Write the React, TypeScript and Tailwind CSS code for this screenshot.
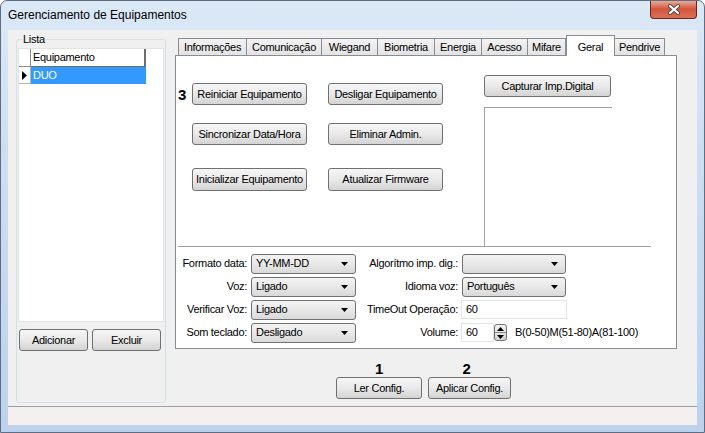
import React from 'react';

function Btn({ children, className = '' }: { children: React.ReactNode; className?: string }) {
  return (
    <button
      className={`flex items-center justify-center whitespace-nowrap rounded-[3px] border border-[#707070] bg-gradient-to-b from-[#f6f6f6] via-[#e9e9e9] to-[#d4d4d4] text-[11px] leading-none tracking-[-0.3px] text-black ${className}`}
    >
      {children}
    </button>
  );
}

function Combo({ value, className = '' }: { value: string; className?: string }) {
  return (
    <div
      className={`flex h-[20px] items-center justify-between rounded-[3px] border border-[#707070] bg-gradient-to-b from-[#f3f3f3] via-[#e8e8e8] to-[#d9d9d9] pl-[4px] pr-[7px] ${className}`}
    >
      <span className="leading-none">{value}</span>
      <svg width="7" height="4" viewBox="0 0 7 4">
        <path d="M0 0h7L3.5 4z" fill="#000" />
      </svg>
    </div>
  );
}

const tabs = [
  { nome: 'Informações', w: 'w-[69px]' },
  { nome: 'Comunicação', w: 'w-[75px]' },
  { nome: 'Wiegand', w: 'w-[56px]' },
  { nome: 'Biometria', w: 'w-[57px]' },
  { nome: 'Energia', w: 'w-[47px]' },
  { nome: 'Acesso', w: 'w-[46px]' },
  { nome: 'Mifare', w: 'w-[38px]' },
  { nome: 'Geral', w: 'w-[49px]', ativo: true },
  { nome: 'Pendrive', w: 'w-[50px]' },
];

export default function App() {
  return (
    <div className="flex h-[433px] w-[705px] flex-col overflow-hidden rounded-t-[7px] border border-[#5f6d82] bg-gradient-to-b from-[#dbe8f6] via-[#c9dbf0] to-[#bcd2ec] font-['Liberation_Sans',Arial,sans-serif] text-[11px] tracking-[-0.3px] text-black">
      {/* barra de titulo */}
      <div className="flex h-[29px] shrink-0 items-start justify-between">
        <div className="pl-[7px] pt-[7px] text-[12px] leading-[14px] tracking-normal">Gerenciamento de Equipamentos</div>
        <div className="mr-[7px] -mt-px flex h-[19px] w-[47px] items-center justify-center rounded-b-[4px] border border-t-0 border-[#6b2417] bg-gradient-to-b from-[#ebb2a4] via-[#d2553b] to-[#da7158]">
          <svg width="14" height="11" viewBox="0 0 14 11">
            <path d="M3 2l8 7M11 2L3 9" stroke="#4a4a4a" strokeWidth="4" strokeLinecap="round" />
            <path d="M3 2l8 7M11 2L3 9" stroke="#fff" strokeWidth="2.2" strokeLinecap="round" />
          </svg>
        </div>
      </div>

      {/* area cliente */}
      <div className="mx-[7px] flex h-[395px] shrink-0 flex-col bg-[#f0f0f0]">
        <div className="flex h-[376px] shrink-0">
          {/* Lista */}
          <div className="relative ml-[8px] mt-[9px] flex h-[364px] w-[150px] flex-col rounded-[3px] border border-[#d5dfe5]">
            <span className="absolute -top-[7px] left-[5px] bg-[#f0f0f0] px-[1px] leading-[12px]">Lista</span>
            <div className="ml-px mt-[8px] h-[274px] w-[146px] border border-[#e3e3e3] bg-white">
              <div className="flex h-[18px]">
                <div className="w-[12px] border-b border-r border-[#8a8a8a] bg-white" />
                <div className="flex w-[115px] items-center border-b border-r-2 border-[#6e6e6e] bg-white pl-[2px]">
                  Equipamento
                </div>
              </div>
              <div className="flex h-[17px]">
                <div className="flex w-[12px] items-center justify-center border-b border-r border-[#b5b5b5]">
                  <svg width="5" height="9" viewBox="0 0 5 9">
                    <path d="M0 0l5 4.5L0 9z" fill="#000" />
                  </svg>
                </div>
                <div className="flex w-[115px] items-center bg-[#3399ff] pl-[2px] text-white">DUO</div>
              </div>
            </div>
            <div className="ml-[2px] mt-[7px] flex gap-[4px]">
              <Btn className="h-[22px] w-[69px]">Adicionar</Btn>
              <Btn className="h-[22px] w-[69px]">Excluir</Btn>
            </div>
          </div>

          {/* abas */}
          <div className="ml-[9px] flex w-[502px] flex-col">
            <div className="mt-[5px] flex h-[20px] items-end pl-[3px]">
              {tabs.map((t, i) =>
                t.ativo ? (
                  <div
                    key={t.nome}
                    className={`relative z-10 -mb-px flex h-[21px] items-start justify-center border-x border-t border-[#898c95] bg-white pt-[3px] ${t.w}`}
                  >
                    {t.nome}
                  </div>
                ) : (
                  <div
                    key={t.nome}
                    className={`flex h-[17px] items-center justify-center border-t border-r border-[#898c95] bg-gradient-to-b from-[#f2f2f2] to-[#e3e3e3] ${i === 0 ? 'border-l' : ''} ${t.w}`}
                  >
                    {t.nome}
                  </div>
                )
              )}
            </div>

            <div className="flex h-[294px] flex-col border border-[#898c95] bg-white">
              <div className="ml-[2px] flex h-[191px] w-[473px] border-b border-[#a0a0a0]">
                <div className="flex flex-col">
                  <div className="mt-[27px] flex items-center">
                    <span className="w-[14px] text-[15px] font-bold leading-none">3</span>
                    <Btn className="h-[22px] w-[115px]">Reiniciar Equipamento</Btn>
                    <Btn className="ml-[21px] h-[22px] w-[115px]">Desligar Equipamento</Btn>
                  </div>
                  <div className="mt-[18px] flex pl-[14px]">
                    <Btn className="h-[22px] w-[115px]">Sincronizar Data/Hora</Btn>
                    <Btn className="ml-[21px] h-[22px] w-[115px]">Eliminar Admin.</Btn>
                  </div>
                  <div className="mt-[23px] flex pl-[14px]">
                    <Btn className="h-[23px] w-[115px]">Inicializar Equipamento</Btn>
                    <Btn className="ml-[21px] h-[23px] w-[115px]">Atualizar Firmware</Btn>
                  </div>
                </div>
                <div className="ml-[41px] flex flex-col">
                  <Btn className="mt-[19px] h-[22px] w-[127px]">Capturar Imp.Digital</Btn>
                  <div className="mt-[10px] w-[128px] flex-1 border-l border-t border-[#a0a0a0]" />
                </div>
              </div>

              <div className="ml-[2px] mt-[6px] flex flex-col gap-[2px]">
                <div className="flex h-[21px] items-center">
                  <span className="w-[69px] text-right">Formato data:</span>
                  <Combo value="YY-MM-DD" className="ml-[4px] w-[105px]" />
                  <span className="w-[102px] text-right">Algorítmo imp. dig.:</span>
                  <Combo value="" className="ml-[4px] w-[104px]" />
                </div>
                <div className="flex h-[21px] items-center">
                  <span className="w-[69px] text-right">Voz:</span>
                  <Combo value="Ligado" className="ml-[4px] w-[105px]" />
                  <span className="w-[102px] text-right">Idioma voz:</span>
                  <Combo value="Português" className="ml-[4px] w-[104px]" />
                </div>
                <div className="flex h-[21px] items-center">
                  <span className="w-[69px] text-right">Verificar Voz:</span>
                  <Combo value="Ligado" className="ml-[4px] w-[105px]" />
                  <span className="w-[102px] text-right">TimeOut Operação:</span>
                  <div className="ml-[3px] flex h-[19px] w-[106px] items-center border border-[#e2e3ea] pl-[4px]">60</div>
                </div>
                <div className="flex h-[21px] items-center">
                  <span className="w-[69px] text-right">Som teclado:</span>
                  <Combo value="Desligado" className="ml-[4px] w-[105px]" />
                  <span className="w-[102px] text-right">Volume:</span>
                  <div className="ml-[3px] flex h-[19px] w-[33px] items-center border border-[#e2e3ea] pl-[4px]">60</div>
                  <div className="flex h-[17px] w-[13px] flex-col overflow-hidden rounded-[3px] border border-[#707070] bg-gradient-to-b from-[#f3f3f3] to-[#d4d4d4]">
                    <div className="flex flex-1 items-center justify-center border-b border-[#8a8a8a]">
                      <svg width="7" height="4" viewBox="0 0 7 4">
                        <path d="M0 4h7L3.5 0z" fill="#000" />
                      </svg>
                    </div>
                    <div className="flex flex-1 items-center justify-center">
                      <svg width="7" height="4" viewBox="0 0 7 4">
                        <path d="M0 0h7L3.5 4z" fill="#000" />
                      </svg>
                    </div>
                  </div>
                  <span className="ml-[8px]">B(0-50)M(51-80)A(81-100)</span>
                </div>
              </div>
            </div>

            <div className="ml-[161px] mt-[12px] flex">
              <div className="flex w-[86px] flex-col items-center">
                <span className="h-[16px] text-[15px] font-bold leading-[16px]">1</span>
                <Btn className="h-[22px] w-[86px]">Ler Config.</Btn>
              </div>
              <div className="ml-[6px] flex w-[83px] flex-col items-center">
                <span className="h-[16px] pr-[6px] text-[15px] font-bold leading-[16px]">2</span>
                <Btn className="h-[22px] w-[83px]">Aplicar Config.</Btn>
              </div>
            </div>
          </div>
        </div>

        {/* barra de status */}
        <div className="h-[19px] shrink-0 border-t border-[#a0a0a0] bg-[#f4f0f0]" />
      </div>
    </div>
  );
}
